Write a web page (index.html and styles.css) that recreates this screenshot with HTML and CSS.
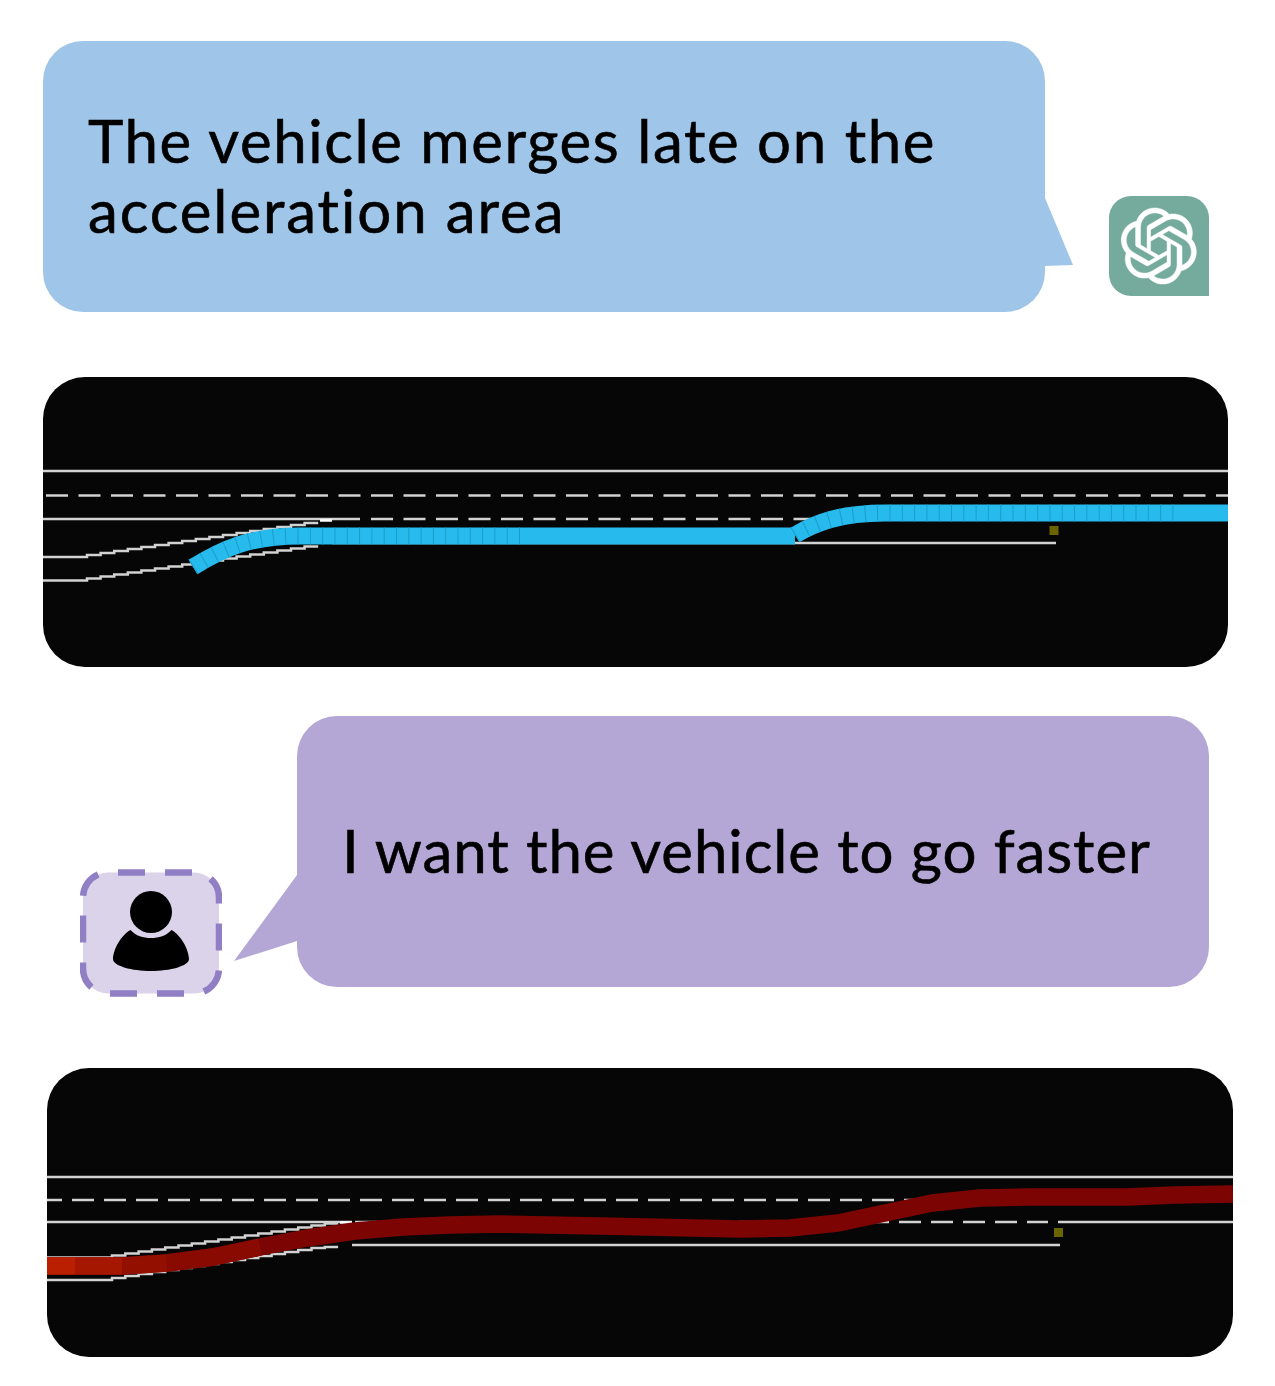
FILE: index.html
```html
<!DOCTYPE html>
<html lang="en">
<head>
<meta charset="utf-8">
<title>Driving feedback chat</title>
<link rel="stylesheet" href="styles.css">
</head>
<body>
<main class="page">
  <section class="row row-ai">
    <div class="bubble bubble-ai">
      <p class="msg"><span class="line line-a">The vehicle merges late on the</span><span class="line line-b">acceleration area</span></p>
      <svg class="tail tail-ai" viewBox="0 0 29 70"><polygon class="fill-ai" points="0,0 28,67 0,68"/></svg>
    </div>
    <div class="avatar-ai">
      <svg class="logo" viewBox="0 0 41 41"><path class="logo-mark" d="M37.5324 16.8707C37.9808 15.5241 38.1363 14.0974 37.9886 12.6859C37.8409 11.2744 37.3934 9.91076 36.676 8.68622C35.6126 6.83404 33.9882 5.3676 32.0373 4.4985C30.0864 3.62941 27.9098 3.40259 25.8215 3.85078C24.8796 2.7893 23.7219 1.94125 22.4257 1.36341C21.1295 0.785575 19.7249 0.491269 18.3058 0.500197C16.1708 0.495044 14.0893 1.16803 12.3614 2.42214C10.6335 3.67624 9.34853 5.44666 8.6917 7.47815C7.30085 7.76286 5.98686 8.3414 4.8377 9.17505C3.68854 10.0087 2.73073 11.0782 2.02839 12.312C0.956464 14.1591 0.498905 16.2988 0.721698 18.4228C0.944492 20.5467 1.83612 22.5449 3.268 24.1293C2.81966 25.4759 2.66413 26.9026 2.81182 28.3141C2.95951 29.7256 3.40701 31.0892 4.12437 32.3138C5.18791 34.1659 6.8123 35.6322 8.76321 36.5013C10.7141 37.3704 12.8907 37.5973 14.9789 37.1492C15.9208 38.2107 17.0786 39.0587 18.3747 39.6366C19.6709 40.2144 21.0755 40.5087 22.4946 40.4998C24.6307 40.5054 26.7133 39.8321 28.4418 38.5772C30.1704 37.3223 31.4556 35.5506 32.1119 33.5179C33.5027 33.2332 34.8167 32.6547 35.9659 31.821C37.115 30.9874 38.0728 29.9178 38.7752 28.684C39.8458 26.8371 40.3023 24.6979 40.0789 22.5748C39.8556 20.4517 38.9639 18.4544 37.5324 16.8707ZM22.4978 37.8849C20.7443 37.8874 19.0459 37.2733 17.6994 36.1501C17.7601 36.117 17.8666 36.0586 17.936 36.0161L25.9004 31.4156C26.1003 31.3019 26.2663 31.137 26.3813 30.9378C26.4964 30.7386 26.5563 30.5124 26.5549 30.2825V19.0542L29.9213 20.998C29.9389 21.0068 29.9541 21.0198 29.9656 21.0359C29.977 21.052 29.9842 21.0707 29.9867 21.0902V30.3889C29.9842 32.375 29.1946 34.2791 27.7909 35.6841C26.3872 37.0892 24.4838 37.8806 22.4978 37.8849ZM6.39227 31.0064C5.51397 29.4888 5.19742 27.7107 5.49804 25.9832C5.55718 26.0187 5.66048 26.0818 5.73461 26.1244L13.699 30.7248C13.8975 30.8408 14.1233 30.902 14.3532 30.902C14.583 30.902 14.8088 30.8408 15.0073 30.7248L24.731 25.1103V28.9979C24.7321 29.0177 24.7283 29.0376 24.7199 29.0556C24.7115 29.0736 24.6988 29.0893 24.6829 29.1012L16.6317 33.7497C14.9096 34.7416 12.8643 35.0097 10.9447 34.4954C9.02506 33.9811 7.38785 32.7263 6.39227 31.0064ZM4.29707 13.6194C5.17156 12.0998 6.55279 10.9364 8.19885 10.3327C8.19885 10.4013 8.19491 10.5228 8.19491 10.6071V19.808C8.19351 20.0378 8.25334 20.2638 8.36823 20.4629C8.48312 20.6619 8.64893 20.8267 8.84863 20.9404L18.5723 26.5542L15.206 28.4979C15.1894 28.5089 15.1703 28.5155 15.1505 28.5173C15.1307 28.5191 15.1107 28.516 15.0924 28.5082L7.04046 23.8557C5.32135 22.8601 4.06716 21.2235 3.55289 19.3046C3.03862 17.3858 3.30624 15.3413 4.29707 13.6194ZM31.955 20.0556L22.2312 14.4411L25.5976 12.4981C25.6142 12.4872 25.6333 12.4805 25.6531 12.4787C25.6729 12.4769 25.6928 12.4801 25.7111 12.4879L33.7631 17.1364C34.9967 17.849 36.0017 18.8982 36.6606 20.1613C37.3194 21.4244 37.6047 22.849 37.4832 24.2684C37.3617 25.6878 36.8382 27.0432 35.9743 28.1759C35.1103 29.3086 33.9415 30.1717 32.6047 30.6641C32.6047 30.5947 32.6047 30.4733 32.6047 30.3889V21.188C32.6066 20.9586 32.5474 20.7328 32.4332 20.5338C32.319 20.3348 32.154 20.1698 31.955 20.0556ZM35.3055 15.0128C35.2464 14.9765 35.1431 14.9142 35.069 14.8717L27.1045 10.2712C26.906 10.1554 26.6803 10.0943 26.4504 10.0943C26.2206 10.0943 25.9948 10.1554 25.7963 10.2712L16.0726 15.8858V11.9982C16.0715 11.9783 16.0753 11.9585 16.0837 11.9405C16.0921 11.9225 16.1048 11.9068 16.1207 11.8949L24.1719 7.25025C25.4053 6.53903 26.8158 6.19376 28.2383 6.25482C29.6608 6.31589 31.0364 6.78077 32.2044 7.59508C33.3723 8.40939 34.2842 9.53945 34.8334 10.8531C35.3826 12.1667 35.5464 13.6095 35.3055 15.0128ZM14.2424 21.9419L10.8752 19.9981C10.8576 19.9893 10.8423 19.9763 10.8309 19.9602C10.8195 19.9441 10.8122 19.9254 10.8098 19.9058V10.6071C10.8107 9.18295 11.2173 7.78848 11.9819 6.58696C12.7466 5.38544 13.8377 4.42659 15.1275 3.82264C16.4173 3.21869 17.8524 2.99464 19.2649 3.1767C20.6775 3.35876 22.0089 3.93941 23.1034 4.85067C23.0427 4.88379 22.937 4.94215 22.8668 4.98473L14.9024 9.58517C14.7025 9.69878 14.5366 9.86356 14.4215 10.0626C14.3065 10.2616 14.2466 10.4877 14.2479 10.7175L14.2424 21.9419ZM16.071 17.9991L20.4018 15.4978L24.7325 17.9975V22.9985L20.4018 25.4983L16.071 22.9985V17.9991Z"/></svg>
    </div>
  </section>

  <section class="panel panel-one">
    <svg class="scene" viewBox="43 377 1185 290">
      <line class="road" x1="43" y1="471" x2="1228" y2="471"/>
      <line class="road dash" x1="46" y1="495.5" x2="1228" y2="495.5"/>
      <line class="road" x1="43" y1="519" x2="360" y2="519"/>
      <line class="road dash" x1="371" y1="519" x2="815" y2="519"/>
      <path class="road" d="M43 557H87v-2h13.600v-2h13.600v-2h13.600v-2h13.600v-2h13.600v-2h13.600v-2h13.600v-2h13.600v-2h13.600v-2h13.600v-2h13.600v-2h13.600v-2h13.600v-2h13.600v-2h13.600v-2h13.600v-2h13.600"/>
      <line class="road bright" x1="320" y1="520.5" x2="332" y2="520.5"/>
      <path class="road" d="M43 580.500H87v-2h13.600v-2h13.600v-2h13.600v-2h13.600v-2h13.600v-2h13.600v-2h13.600v-2h13.600v-2h13.600v-2h13.600v-2h13.600v-2h13.600v-2h13.600v-2h13.600v-2h13.600v-2h13.600v-2h13.600"/>
      <line class="road" x1="332" y1="543" x2="1056" y2="543"/>
      <rect class="marker" x="1049.500" y="526" width="9" height="9"/>
      <path class="trail-blue" d="M193 567C222 549 250 536 300 536H795"/>
      <path class="trail-blue-ticks" d="M193 567C222 549 250 536 300 536H520"/>
      <path class="trail-blue" d="M795 535C815 523 840 513 885 513H1228"/>
      <path class="trail-blue-ticks" d="M795 535C815 523 840 513 885 513H1175"/>
    </svg>
  </section>

  <section class="row row-user">
    <div class="avatar-user">
      <svg class="user-art" viewBox="80 869 142 128">
        <rect class="user-box" x="83" y="872.500" width="136" height="121" rx="25"/>
        <circle cx="151" cy="912" r="21"/>
        <path d="M130.500 930C136 936 143 938 151 938S166 936 171.500 930C181 935 189 950 189 959C189 966 170 971 151 971S113 966 113 959C113 950 121 935 130.500 930Z"/>
      </svg>
    </div>
    <div class="bubble bubble-user">
      <p class="msg"><span class="line line-c">I want the vehicle to go faster</span></p>
      <svg class="tail tail-user" viewBox="0 0 63 90"><polygon class="fill-user" points="63,0 0,86 63,66"/></svg>
    </div>
  </section>

  <section class="panel panel-two">
    <svg class="scene" viewBox="47 1068 1186 289">
      <line class="road" x1="47" y1="1177" x2="1233" y2="1177"/>
      <line class="road dash-wide" x1="40" y1="1200" x2="925" y2="1200"/>
      <line class="road" x1="47" y1="1222" x2="352" y2="1222"/>
      <line class="road dash-wide" x1="355" y1="1222" x2="1048" y2="1222"/>
      <line class="road" x1="1058" y1="1222" x2="1233" y2="1222"/>
      <path class="road" d="M47 1257.500H112v-2h13.300v-2h13.300v-2h13.300v-2h13.300v-2h13.300v-2h13.300v-2h13.300v-2h13.300v-2h13.300v-2h13.300v-2h13.300v-2h13.300v-2h13.300v-2h13.300v-2h13.300v-2h13.300v-2h13.300"/>
      <line class="road bright" x1="340" y1="1222.500" x2="352" y2="1222.500"/>
      <path class="road" d="M47 1280H112v-2h13.300v-2h13.300v-2h13.300v-2h13.300v-2h13.300v-2h13.300v-2h13.300v-2h13.300v-2h13.300v-2h13.300v-2h13.300v-2h13.300v-2h13.300v-2h13.300v-2h13.300v-2h13.300v-1h13.300"/>
      <line class="road" x1="352" y1="1245" x2="1060" y2="1245"/>
      <rect class="marker" x="1054" y="1228" width="9" height="9"/>
      <polyline class="trail-red" points="47,1266 122,1266 167,1263 213,1257 260,1247 307,1238 355,1231 403,1227 450,1225 500,1224 600,1226 740,1229 790,1228 838,1223 885,1213 932,1203 980,1198 1028,1197 1077,1197 1127,1197 1175,1195 1233,1194"/>
      <polyline class="trail-red red-4" points="167,1263 213,1257 260,1247"/>
      <polyline class="trail-red red-3" points="122,1266 167,1263"/>
      <line class="trail-red red-2" x1="75" y1="1266" x2="122" y2="1266"/>
      <line class="trail-red red-1" x1="47" y1="1266" x2="75" y2="1266"/>
    </svg>
  </section>
</main>
</body>
</html>
```
FILE: styles.css
```css
html, body {
  margin: 0;
  padding: 0;
  background: #fff;
}

.page {
  width: 1275px;
  height: 1386px;
  display: flex;
  flex-direction: column;
  overflow: hidden;
}

.row {
  display: flex;
}

.row-ai {
  margin-top: 41px;
  padding-left: 43px;
  gap: 64px;
  align-items: flex-end;
}

.row-user {
  margin-top: 49px;
  padding-left: 80px;
  gap: 75px;
  align-items: flex-start;
}

.bubble {
  position: relative;
  height: 271px;
  border-radius: 40px;
  display: flex;
  align-items: center;
  padding-left: 45px;
  padding-bottom: 3px;
  box-sizing: border-box;
}

.bubble-ai {
  width: 1002px;
  background: #9fc5e8;
}

.bubble-user {
  width: 912px;
  background: #b4a7d6;
}

.msg {
  margin: 0;
  font-family: "Lato", "Open Sans", sans-serif;
  font-size: 60px;
  font-weight: 400;
  line-height: 70px;
  color: #000;
  -webkit-text-stroke: 0.6px #000;
  white-space: nowrap;
}

.line {
  display: block;
}

.line-a { letter-spacing: 1.57px; }
.line-b { letter-spacing: 1.9px; }
.line-c { letter-spacing: 0.93px; }

.tail {
  position: absolute;
  display: block;
}

.tail-ai {
  left: 100%;
  top: 157px;
  width: 29px;
  height: 70px;
}

.tail-user {
  right: 100%;
  top: 159px;
  width: 63px;
  height: 90px;
}

.fill-ai { fill: #9fc5e8; }
.fill-user { fill: #b4a7d6; }

.avatar-ai {
  width: 100px;
  height: 100px;
  margin-bottom: 16px;
  background: #75ab9c;
  border-radius: 22px 22px 0 22px;
  display: flex;
  align-items: center;
  justify-content: center;
}

.logo {
  width: 78px;
  height: 78px;
  display: block;
}

.logo-mark {
  fill: #fff;
  stroke: #fff;
  stroke-width: 0.25px;
}

.avatar-user {
  margin-top: 153px;
  width: 142px;
  height: 128px;
}

.user-art {
  display: block;
  width: 142px;
  height: 128px;
}

.user-box {
  fill: #dbd3e9;
  stroke: #917fc5;
  stroke-width: 6.500px;
  stroke-dasharray: 27 20;
  stroke-dashoffset: -10;
}

.panel {
  background: #060606;
  border-radius: 42px;
  overflow: hidden;
}

.panel-one {
  margin: 65px 0 0 43px;
  width: 1185px;
  height: 290px;
}

.panel-two {
  margin: 71px 0 0 47px;
  width: 1186px;
  height: 289px;
}

.scene {
  display: block;
  width: 100%;
  height: 100%;
}

.road {
  fill: none;
  stroke: #d2d2d2;
  stroke-width: 2.500px;
}

.dash {
  stroke-dasharray: 22 10.500;
}

.dash-wide {
  stroke-dasharray: 22 10;
}

.bright {
  stroke: #fff;
  stroke-width: 2.500px;
}

.marker {
  fill: #6b6500;
}

.trail-blue {
  fill: none;
  stroke: #26bbec;
  stroke-width: 17px;
}

.trail-blue-ticks {
  fill: none;
  stroke: #1c9ccb;
  stroke-width: 17px;
  stroke-dasharray: 1 11.300;
}

.trail-red {
  fill: none;
  stroke: #7c0504;
  stroke-width: 17.500px;
  stroke-linejoin: round;
}

.red-4 { stroke: #880a01; }
.red-3 { stroke: #930f00; }
.red-2 { stroke: #a51700; }
.red-1 { stroke: #b91f00; }
```
